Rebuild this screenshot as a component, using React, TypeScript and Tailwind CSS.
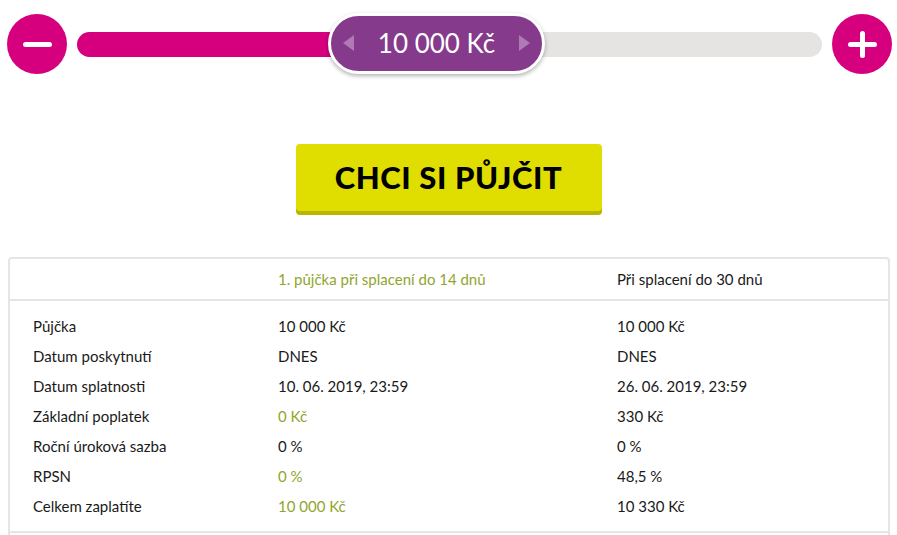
import React from "react";

const rows: { label: string; first: string; second: string; green?: boolean }[] = [
  { label: "Půjčka", first: "10 000 Kč", second: "10 000 Kč" },
  { label: "Datum poskytnutí", first: "DNES", second: "DNES" },
  { label: "Datum splatnosti", first: "10. 06. 2019, 23:59", second: "26. 06. 2019, 23:59" },
  { label: "Základní poplatek", first: "0 Kč", second: "330 Kč", green: true },
  { label: "Roční úroková sazba", first: "0 %", second: "0 %" },
  { label: "RPSN", first: "0 %", second: "48,5 %", green: true },
  { label: "Celkem zaplatíte", first: "10 000 Kč", second: "10 330 Kč", green: true },
];

function RoundButton({ plus }: { plus?: boolean }) {
  return (
    <button className="relative w-[60px] h-[60px] shrink-0 rounded-full bg-[#d6007f] flex items-center justify-center">
      <span className="absolute w-[29px] h-[5px] rounded-full bg-white" />
      {plus && <span className="absolute w-[5px] h-[27px] rounded-full bg-white" />}
    </button>
  );
}

export default function App() {
  return (
    <div className="w-[897px] h-[535px] overflow-hidden bg-white text-[#1a1a1a] font-['Lato',sans-serif]">
      {/* Slider */}
      <div className="flex items-center pl-[7px] pr-[5px] pt-[14px]">
        <RoundButton />
        <div className="relative flex-1 mx-[10px] h-[25px] rounded-full bg-[#e5e4e3]">
          <div className="h-full w-[270px] rounded-l-full bg-[#d6007f]" />
          <div className="absolute left-[251px] top-[-19px] w-[217px] h-[61px] rounded-full border-[3px] border-white bg-[#853a8c] shadow-[0_2px_4px_rgba(0,0,0,0.3)] flex items-center justify-between px-[12px]">
            <span className="w-0 h-0 border-y-[8px] border-y-transparent border-r-[11px] border-r-[#b07ab5]" />
            <span className="text-white text-[26px] leading-none">10 000 Kč</span>
            <span className="w-0 h-0 border-y-[8px] border-y-transparent border-l-[11px] border-l-[#b07ab5]" />
          </div>
        </div>
        <RoundButton plus />
      </div>

      {/* CTA */}
      <div className="flex justify-center mt-[70px]">
        <button className="w-[306px] h-[67px] rounded-[4px] bg-[#dfde00] shadow-[0_4px_0_#b8b500] mb-[4px] text-black font-black text-[31px] tracking-[0.6px]">
          CHCI SI PŮJČIT
        </button>
      </div>

      {/* Table */}
      <div className="mx-[8px] mt-[42px] w-[882px] border-2 border-[#e5e5e5] rounded-[4px] text-[15px]">
        <div className="flex h-[42px] items-center border-b-2 border-[#e5e5e5]">
          <div className="w-[268px]" />
          <div className="w-[339px] text-[#8fa62e]">1. půjčka při splacení do 14 dnů</div>
          <div>Při splacení do 30 dnů</div>
        </div>
        <div className="pt-[10px] pb-[10px] pl-[23px] border-b-2 border-[#e5e5e5]">
          {rows.map((r) => (
            <div key={r.label} className="flex h-[30px] items-center">
              <div className="w-[245px]">{r.label}</div>
              <div className={`w-[339px] ${r.green ? "text-[#8fa62e]" : ""}`}>{r.first}</div>
              <div>{r.second}</div>
            </div>
          ))}
        </div>
        <div className="h-[40px]" />
      </div>
    </div>
  );
}
